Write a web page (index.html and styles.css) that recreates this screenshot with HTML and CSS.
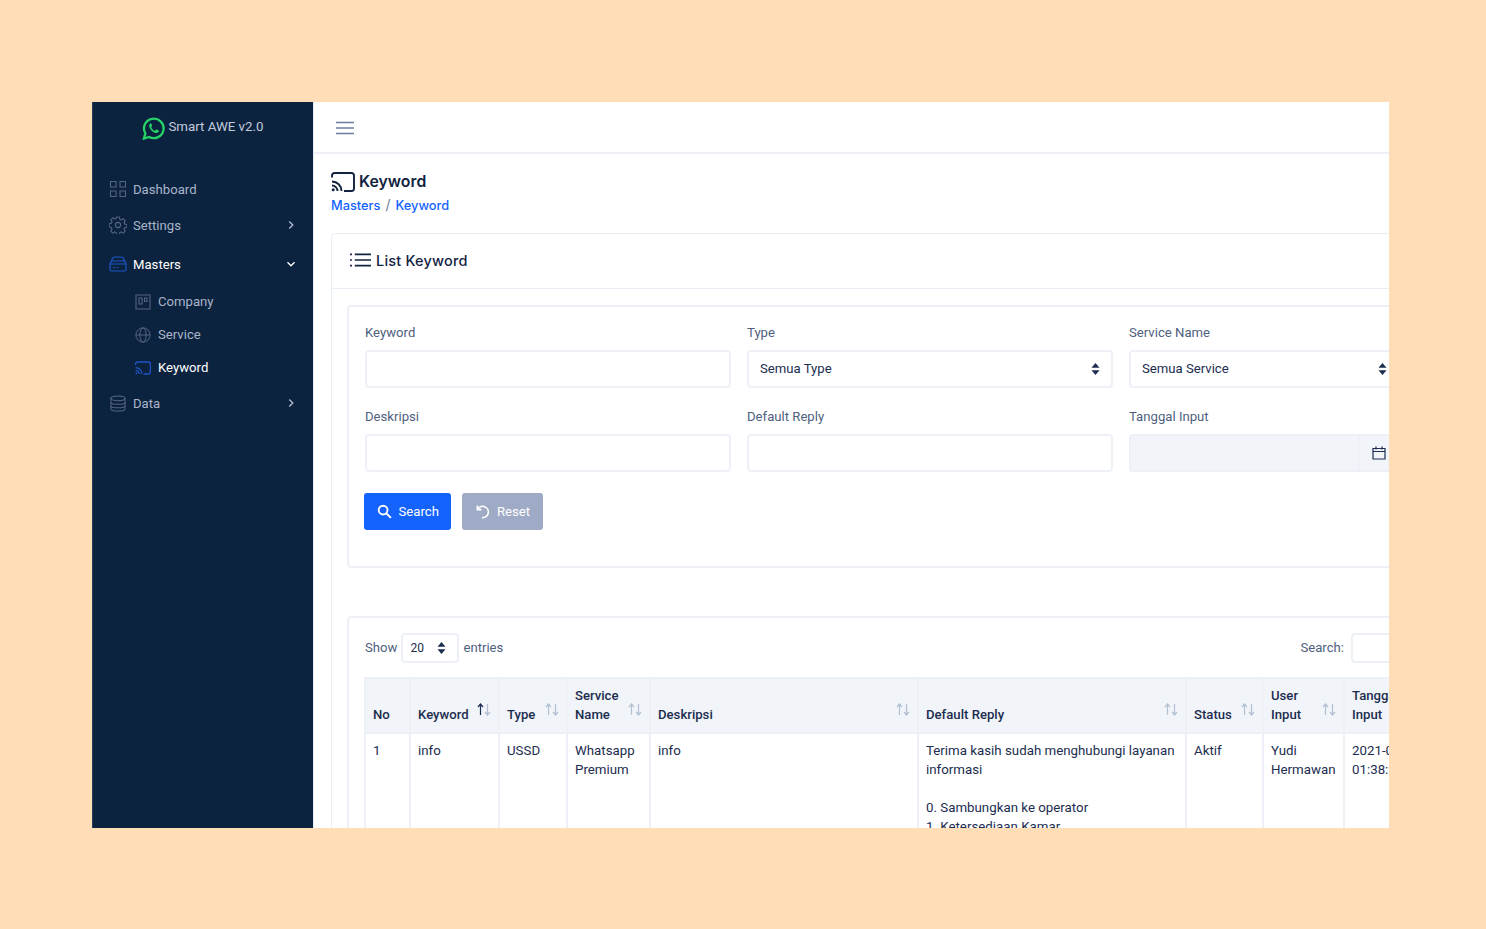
FILE: index.html
```html
<!DOCTYPE html>
<html lang="en">
<head>
    <meta charset="UTF-8">
    <title>Smart AWE v2.0 - Keyword</title>
    <link rel="stylesheet" href="styles.css">
</head>
<body>
    <svg class="sprite" width="0" height="0">
        <symbol id="cast" viewBox="0 0 24 20">
            <path d="M1 5.500V3.500A2.500 2.500 0 0 1 3.500 1h17A2.500 2.500 0 0 1 23 3.500v13a2.500 2.500 0 0 1-2.500 2.500H13" fill="none" stroke="currentColor" stroke-width="1.900"/>
            <path d="M1 9.500A9.500 9.500 0 0 1 10.500 19M1 13.500A5.500 5.500 0 0 1 6.500 19" fill="none" stroke="currentColor" stroke-width="1.900"/>
            <circle cx="2.200" cy="17.800" r="1.500" fill="currentColor"/>
        </symbol>
        <symbol id="updown" viewBox="0 0 9 12">
            <path d="M4.500 0 8.500 4.800H.5zM4.500 12 .5 7.200h8z" fill="currentColor"/>
        </symbol>
        <symbol id="sort" viewBox="0 0 14 13">
            <path d="M3.500 12V1.500M1 4l2.500-3L6 4" fill="none" stroke="var(--sort-up, currentColor)" stroke-width="1.200"/>
            <path d="M10.500 1v10.500M8 9l2.500 3L13 9" fill="none" stroke="currentColor" stroke-width="1.200"/>
        </symbol>
        <symbol id="chevron" viewBox="0 0 10 10">
            <path d="M3.300 1.500 6.800 5 3.300 8.500" fill="none" stroke="currentColor" stroke-width="1.300"/>
        </symbol>
    </svg>

    <div class="window">
        <aside class="sidebar">
            <div class="brand">
                <svg class="brand-logo" viewBox="0 0 24 24" width="23" height="23">
                    <path d="M2 22.500 3.500 17A10.200 10.200 0 1 1 7.400 20.800z" fill="none" stroke="#25d366" stroke-width="2.400"/>
                    <path d="M8.600 6.800c-.7.5-1.300 1.400-1.100 2.800.4 3 3.900 6.600 7 7.100 1.400.2 2.400-.4 2.900-1.200.3-.5.3-1 .2-1.300l-2.300-1.200c-.3-.1-.5 0-.7.2l-.8 1c-.2.2-.4.2-.6.1-1.500-.7-2.800-2-3.500-3.400-.1-.2-.1-.4.1-.6l.7-.8c.2-.2.2-.4.1-.6l-1-2.100c-.2-.3-.6-.3-1 0z" fill="#25d366"/>
                </svg>
                <span>Smart AWE v2.0</span>
            </div>
            <nav class="menu">
                <a class="menu-item">
                    <svg class="menu-icon" viewBox="0 0 18 18" width="18" height="18"><path d="M1.500 1.500h5.500v5.500H1.500zM11 1.500h5.500v5.500H11zM1.500 11h5.500v5.500H1.500zM11 11h5.500v5.500H11z" fill="none" stroke="currentColor" stroke-width="1.100"/></svg>
                    <span>Dashboard</span>
                </a>
                <a class="menu-item item-settings">
                    <svg class="menu-icon" viewBox="0 0 18 18" width="18" height="18"><circle cx="9" cy="9" r="2.600" fill="none" stroke="currentColor" stroke-width="1.100"/><path d="M7.600 1h2.800l.4 2.200 1.500.7 1.900-1.200 2 2-1.200 1.900.7 1.500 2.200.4v2.800l-2.200.4-.7 1.500 1.200 1.900-2 2-1.900-1.200-1.500.7-.4 2.200H7.600l-.4-2.200-1.500-.7-1.900 1.200-2-2 1.200-1.900-.7-1.500L.1 10.400V7.600l2.200-.4.7-1.500-1.200-1.900 2-2 1.900 1.200 1.500-.7z" fill="none" stroke="currentColor" stroke-width="1.100" stroke-linejoin="round"/></svg>
                    <span>Settings</span>
                    <svg class="menu-caret" width="10" height="10"><use href="#chevron"/></svg>
                </a>
                <a class="menu-item is-open">
                    <svg class="menu-icon" viewBox="0 0 18 16" width="18" height="16"><path d="M1 8 3.500 2.500Q4 1 5.500 1h7q1.500 0 2 1.500L17 8v5.500q0 1.500-1.500 1.500h-13Q1 15 1 13.500zM1 8h16M3 5h12M4 11.500h2.500M8 11.500h1.500" fill="none" stroke="currentColor" stroke-width="1.200"/></svg>
                    <span>Masters</span>
                    <svg class="menu-caret caret-down" width="10" height="10"><use href="#chevron"/></svg>
                </a>
                <div class="submenu">
                    <a class="sub-item">
                        <svg class="menu-icon" viewBox="0 0 16 16" width="16" height="16"><path d="M1 1h14v14H1zM4 4h3v6H4zM9.500 4H12v3.500H9.500z" fill="none" stroke="currentColor" stroke-width="1.100"/></svg>
                        <span>Company</span>
                    </a>
                    <a class="sub-item">
                        <svg class="menu-icon" viewBox="0 0 18 18" width="16" height="16"><circle cx="9" cy="9" r="8" fill="none" stroke="currentColor" stroke-width="1.100"/><ellipse cx="9" cy="9" rx="3.500" ry="8" fill="none" stroke="currentColor" stroke-width="1.100"/><path d="M1 9h16" stroke="currentColor" stroke-width="1.100"/></svg>
                        <span>Service</span>
                    </a>
                    <a class="sub-item is-active">
                        <svg class="menu-icon" width="16" height="14"><use href="#cast"/></svg>
                        <span>Keyword</span>
                    </a>
                </div>
                <a class="menu-item">
                    <svg class="menu-icon" viewBox="0 0 18 18" width="18" height="17"><ellipse cx="9" cy="3.500" rx="7.500" ry="2.500" fill="none" stroke="currentColor" stroke-width="1.100"/><path d="M1.500 3.500v11c0 1.400 3.400 2.500 7.500 2.500s7.500-1.100 7.500-2.500v-11M1.500 7.300c0 1.400 3.400 2.500 7.500 2.500s7.500-1.100 7.500-2.500M1.500 11c0 1.400 3.400 2.500 7.500 2.500s7.500-1.100 7.500-2.500" fill="none" stroke="currentColor" stroke-width="1.100"/></svg>
                    <span>Data</span>
                    <svg class="menu-caret" width="10" height="10"><use href="#chevron"/></svg>
                </a>
            </nav>
        </aside>

        <div class="main">
            <header class="topbar">
                <svg class="burger" viewBox="0 0 18 14" width="18" height="14"><path d="M0 1.500h18M0 7h18M0 12.500h18" stroke="currentColor" stroke-width="1.500"/></svg>
            </header>

            <div class="content">
                <div class="page-head">
                    <h1 class="page-title">
                        <svg width="24" height="20"><use href="#cast"/></svg>
                        <span>Keyword</span>
                    </h1>
                    <div class="breadcrumb"><a>Masters</a><span class="crumb-sep">/</span><a>Keyword</a></div>
                </div>

                <section class="card">
                    <div class="card-head">
                        <svg class="list-icon" viewBox="0 0 22 16" width="21" height="16"><path d="M5 2h17M5 8h17M5 14h17" stroke="currentColor" stroke-width="1.800"/><path d="M0 2h2M0 8h2M0 14h2" stroke="currentColor" stroke-width="1.800"/></svg>
                        <h2>List Keyword</h2>
                    </div>
                    <div class="card-body">
                        <div class="panel filter-panel">
                            <div class="filter-grid">
                                <div class="field">
                                    <label>Keyword</label>
                                    <div class="control"></div>
                                </div>
                                <div class="field">
                                    <label>Type</label>
                                    <div class="control select">Semua Type<svg width="9" height="12"><use href="#updown"/></svg></div>
                                </div>
                                <div class="field">
                                    <label>Service Name</label>
                                    <div class="control select">Semua Service<svg width="9" height="12"><use href="#updown"/></svg></div>
                                </div>
                                <div class="field">
                                    <label>Deskripsi</label>
                                    <div class="control"></div>
                                </div>
                                <div class="field">
                                    <label>Default Reply</label>
                                    <div class="control"></div>
                                </div>
                                <div class="field">
                                    <label>Tanggal Input</label>
                                    <div class="control date">
                                        <div class="date-addon">
                                            <svg viewBox="0 0 14 14" width="14" height="14"><path d="M1 2.500h12v10.500H1zM1 5.500h12M4 .5v3M10 .5v3" fill="none" stroke="currentColor" stroke-width="1.200"/></svg>
                                        </div>
                                    </div>
                                </div>
                            </div>
                            <div class="actions">
                                <button class="btn btn-primary">
                                    <svg viewBox="0 0 16 16" width="15" height="15"><circle cx="6.500" cy="6.500" r="4.700" fill="none" stroke="currentColor" stroke-width="2"/><path d="M10 10l4.800 4.800" stroke="currentColor" stroke-width="2.200"/></svg>
                                    Search
                                </button>
                                <button class="btn btn-muted">
                                    <svg viewBox="0 0 16 16" width="15" height="15"><path d="M2.500 1.500v4.500H7" fill="none" stroke="currentColor" stroke-width="1.700"/><path d="M2.800 6A6 6 0 1 1 7.500 14.500" fill="none" stroke="currentColor" stroke-width="1.700"/></svg>
                                    Reset
                                </button>
                            </div>
                        </div>

                        <div class="panel table-panel">
                            <div class="table-tools">
                                <div class="tool-group">
                                    Show
                                    <div class="length-select">20<svg width="9" height="12"><use href="#updown"/></svg></div>
                                    entries
                                </div>
                                <div class="tool-group search-group">
                                    Search:
                                    <div class="search-box"></div>
                                </div>
                            </div>
                            <table class="data-table">
                                <colgroup>
                                    <col class="col-no"><col class="col-keyword"><col class="col-type"><col class="col-service"><col class="col-desc"><col class="col-reply"><col class="col-status"><col class="col-user"><col class="col-date">
                                </colgroup>
                                <thead>
                                    <tr>
                                        <th>No</th>
                                        <th class="is-sorted">Keyword<svg class="sort" width="14" height="13"><use href="#sort"/></svg></th>
                                        <th>Type<svg class="sort" width="14" height="13"><use href="#sort"/></svg></th>
                                        <th>Service<br>Name<svg class="sort" width="14" height="13"><use href="#sort"/></svg></th>
                                        <th>Deskripsi<svg class="sort" width="14" height="13"><use href="#sort"/></svg></th>
                                        <th>Default Reply<svg class="sort" width="14" height="13"><use href="#sort"/></svg></th>
                                        <th>Status<svg class="sort" width="14" height="13"><use href="#sort"/></svg></th>
                                        <th>User<br>Input<svg class="sort" width="14" height="13"><use href="#sort"/></svg></th>
                                        <th>Tanggal<br>Input</th>
                                    </tr>
                                </thead>
                                <tbody>
                                    <tr>
                                        <td>1</td>
                                        <td>info</td>
                                        <td>USSD</td>
                                        <td>Whatsapp Premium</td>
                                        <td>info</td>
                                        <td>Terima kasih sudah menghubungi layanan informasi<br><br>0. Sambungkan ke operator<br>1. Ketersediaan Kamar</td>
                                        <td>Aktif</td>
                                        <td>Yudi Hermawan</td>
                                        <td>2021-03-04<br>01:38:25</td>
                                    </tr>
                                </tbody>
                            </table>
                        </div>
                    </div>
                </section>
            </div>
        </div>
    </div>
</body>
</html>
```

FILE: styles.css
```css
* {
    box-sizing: border-box;
}

html, body {
    margin: 0;
    height: 100%;
    overflow: hidden;
}

body {
    background-color: #ffdeb7;
    padding: 102px 97px 101px 92px;
    font-family: Roboto, "Liberation Sans", sans-serif;
    font-size: 13.15px;
    color: #1c2d4f;
}

.sprite {
    display: block;
    height: 0;
}

.window {
    display: flex;
    height: 726px;
    background-color: #fff;
    overflow: hidden;
}

/* sidebar */
.sidebar {
    flex: 0 0 222px;
    background-color: #0c2340;
    border-left: 1px solid #2a3d59;
    border-right: 1px solid #e4eaf3;
    color: #a9b4c9;
}

.brand {
    display: flex;
    justify-content: center;
    align-items: flex-start;
    gap: 3px;
    height: 69px;
    padding-top: 15px;
    color: #c3cbdb;
    font-size: 13.3px;
}

.brand span {
    padding-top: 2px;
}

.brand-logo {
    flex: none;
}

.menu-item, .sub-item {
    display: flex;
    align-items: center;
}

.menu-item {
    height: 36px;
    padding: 0 17px 0 16px;
}

.item-settings {
    margin-bottom: 3px;
}

.menu-item span {
    margin-left: 6px;
}

.menu-icon {
    flex: none;
    color: #56647f;
}

.menu-caret {
    margin-left: auto;
    color: #b4bed0;
}

.caret-down {
    transform: rotate(90deg);
    color: #fff;
}

.is-open {
    color: #fff;
}

.is-open .menu-icon, .is-active .menu-icon {
    color: #1d56c4;
}

.submenu {
    padding: 3px 0 1px 42px;
}

.sub-item {
    height: 33px;
}

.sub-item span {
    margin-left: 7px;
}

.is-active {
    color: #fff;
}

/* main column */
.main {
    flex: 1;
    min-width: 0;
}

.topbar {
    display: flex;
    align-items: center;
    height: 52px;
    padding: 2px 0 0 22px;
    border-bottom: 2px solid #edf1f7;
    color: #6d7ea0;
}

.content {
    padding: 17px 0 0 17px;
    width: 1060px;
}

.page-head {
    height: 62px;
}

.page-title {
    display: flex;
    align-items: center;
    gap: 4px;
    margin: 0;
    font-family: Inter, sans-serif;
    font-size: 15.8px;
    font-weight: 600;
    line-height: 22px;
    color: #12233f;
}

.breadcrumb {
    margin-top: 2px;
    font-family: Inter, sans-serif;
    font-size: 12.8px;
    font-weight: 500;
    line-height: 20px;
    color: #1463ff;
}

.crumb-sep {
    margin: 0 5px;
    font-size: 14px;
    font-weight: 400;
    color: #6d7ea0;
}

/* cards */
.card {
    border: 1px solid #e8eef6;
    border-radius: 4px;
    width: 1114px;
}

.card-head {
    display: flex;
    align-items: center;
    gap: 5px;
    height: 55px;
    padding: 0 0 2px 18px;
    border-bottom: 1px solid #e8eef6;
    color: #12233f;
}

.card-head h2 {
    margin: 0;
    font-family: Inter, sans-serif;
    font-size: 14.5px;
    font-weight: 500;
    letter-spacing: 0.2px;
}

.card-body {
    padding: 16px 15px;
}

.panel {
    border: 2px solid #edf1f7;
    border-radius: 4px;
    padding: 15px 16px;
}

.filter-panel {
    height: 263px;
    margin-bottom: 48px;
}

.filter-grid {
    display: grid;
    grid-template-columns: 366px 366px 271px;
    column-gap: 16px;
    row-gap: 18px;
}

.field label {
    display: block;
    height: 28px;
    padding-top: 1px;
    line-height: 20px;
    color: #4f5f80;
}

.control {
    height: 38px;
    border: 2px solid #edf1f7;
    border-radius: 4px;
    background-color: #fff;
}

.select {
    display: flex;
    align-items: center;
    justify-content: space-between;
    padding: 0 11px 2px 11px;
    color: #1c2d4f;
}

.select svg {
    margin-top: 2px;
}

.date {
    display: flex;
    justify-content: flex-end;
    background-color: #f1f4f9;
}

.date-addon {
    display: flex;
    align-items: center;
    width: 40px;
    padding-left: 12px;
    border-left: 2px solid #edf1f7;
    color: #1c2d4f;
}

.actions {
    display: flex;
    gap: 11px;
    margin: 21px 0 0 -1px;
}

.btn {
    display: flex;
    align-items: center;
    gap: 7px;
    height: 37px;
    padding: 0 12.5px;
    border: none;
    border-radius: 3px;
    color: #fff;
    font-family: Roboto, sans-serif;
    font-size: 13.15px;
}

.btn-primary {
    background-color: #1463ff;
}

.btn-muted {
    background-color: #9fabc6;
}

/* table */
.table-panel {
    height: 300px;
    overflow: hidden;
}

.table-tools {
    display: flex;
    justify-content: space-between;
    height: 44px;
    color: #4f5f80;
}

.tool-group {
    display: flex;
    align-items: flex-start;
    gap: 4px;
    line-height: 29px;
}

.search-group {
    gap: 7px;
}

.length-select {
    display: flex;
    align-items: center;
    justify-content: space-between;
    width: 58px;
    height: 30px;
    padding: 0 11px 0 7px;
    border: 2px solid #edf1f7;
    border-radius: 4px;
    font-size: 12px;
    color: #1c2d4f;
}

.search-box {
    width: 60px;
    height: 30px;
    border: 2px solid #edf1f7;
    border-radius: 4px;
}

.data-table {
    table-layout: fixed;
    border-collapse: collapse;
    width: 1120px;
    margin-left: -1px;
}

.col-no { width: 45px; }
.col-keyword { width: 89px; }
.col-type { width: 68px; }
.col-service { width: 83px; }
.col-desc { width: 268px; }
.col-reply { width: 268px; }
.col-status { width: 77px; }
.col-user { width: 81px; }
.col-date { width: 141px; }

.data-table th, .data-table td {
    border: 2px solid #edf1f7;
    padding: 7px 7px 8px;
    text-align: left;
    line-height: 19px;
}

.data-table th {
    position: relative;
    vertical-align: bottom;
    font-weight: 500;
    background-color: #f1f4f9;
    color: #1c2d4f;
}

.data-table td {
    vertical-align: top;
    height: 200px;
    font-size: 13.3px;
}

.sort {
    position: absolute;
    top: 24px;
    right: 7px;
    color: #b3bfd2;
}

.is-sorted .sort {
    --sort-up: #1c2d4f;
}
```
